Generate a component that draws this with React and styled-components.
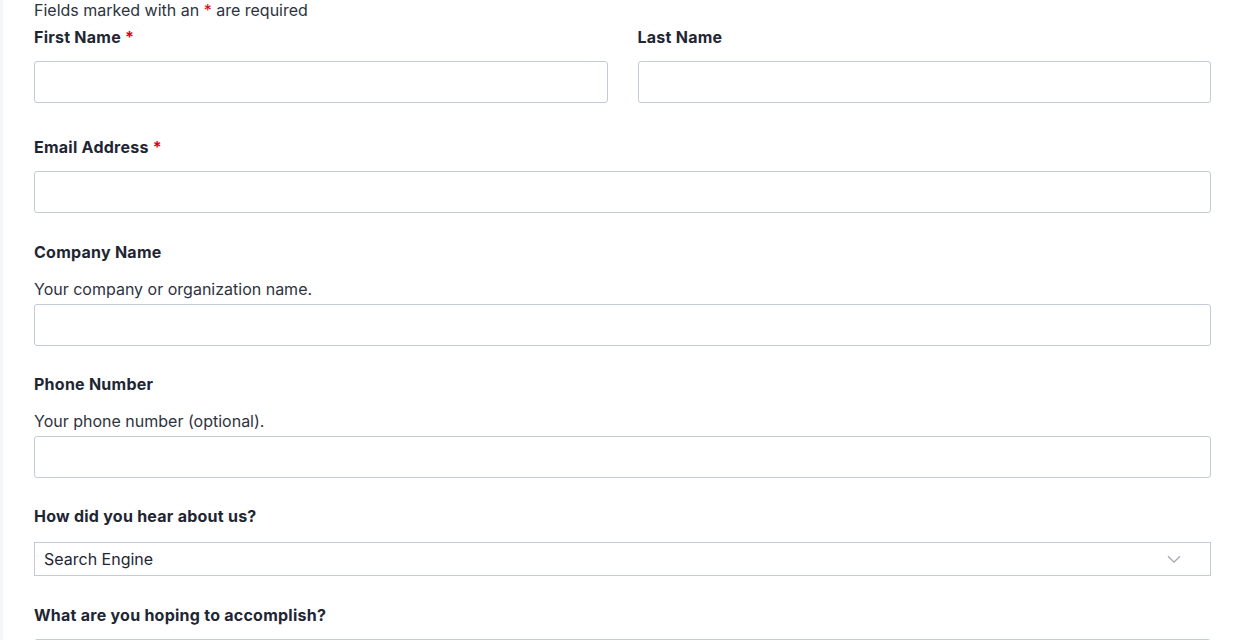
import React from 'react';
import styled, { createGlobalStyle } from 'styled-components';

const GlobalStyle = createGlobalStyle`
  html, body {
    margin: 0;
    padding: 0;
    background: #fff;
  }
  body {
    font-family: Inter, "Noto Sans", "Liberation Sans", sans-serif;
    color: #1f2633;
  }
  * { box-sizing: border-box; }
`

const Page = styled.div`
  min-height: 640px;
  border-left: 3px solid #f3f6f9;
  padding: 0 31px 0 31px;
`

const Note = styled.p`
  margin: 0 0 5px;
  font-size: 16px;
  line-height: 20px;
  color: #2d3340;
`

const Star = styled.span`
  color: #e0000f;
`

const Row = styled.div`
  display: flex;
  gap: 30px;
  margin-bottom: 32px;
`

const Field = styled.div`
  flex: 1;
  margin-bottom: ${props => props.space || '26px'};
`

const Label = styled.label`
  display: block;
  font-size: 16px;
  font-weight: 700;
  line-height: 24px;
  letter-spacing: 0.25px;
  margin-bottom: 12px;
  color: #1f2633;
`

const Help = styled.p`
  margin: 0 0 3px;
  padding-top: 1px;
  font-size: 16px;
  line-height: 24px;
  color: #2d3340;
`

const Input = styled.input`
  display: block;
  width: 100%;
  height: 42px;
  border: 1px solid #c1ccd7;
  border-radius: 3px;
  background: #fff;
  padding: 0 10px;
  font: inherit;
  font-size: 16px;
  outline: none;
`

const SelectWrap = styled.div`
  position: relative;
  padding-top: 2px;
`

const Select = styled.select`
  display: block;
  width: 100%;
  height: 34px;
  border: 1px solid #c1ccd7;
  border-radius: 0;
  background: #fff;
  padding: 0 9px;
  font: inherit;
  font-size: 16px;
  color: #1f2633;
  appearance: none;
  outline: none;
`

const Chevron = styled.svg`
  position: absolute;
  right: 30px;
  top: 50%;
  transform: translateY(-35%);
  pointer-events: none;
`

function ReqLabel({ children, required }) {
  return (
    <Label>
      {children}{required && <Star> *</Star>}
    </Label>
  )
}

export default function App() {
  return (
    <>
      <GlobalStyle />
      <Page>
        <Note>Fields marked with an <Star>*</Star> are required</Note>
        <Row>
          <Field space="0">
            <ReqLabel required>First Name</ReqLabel>
            <Input type="text" />
          </Field>
          <Field space="0">
            <ReqLabel>Last Name</ReqLabel>
            <Input type="text" />
          </Field>
        </Row>
        <Field space="27px">
          <ReqLabel required>Email Address</ReqLabel>
          <Input type="email" />
        </Field>
        <Field>
          <ReqLabel>Company Name</ReqLabel>
          <Help>Your company or organization name.</Help>
          <Input type="text" />
        </Field>
        <Field>
          <ReqLabel>Phone Number</ReqLabel>
          <Help>Your phone number (optional).</Help>
          <Input type="tel" />
        </Field>
        <Field space="27px">
          <ReqLabel>How did you hear about us?</ReqLabel>
          <SelectWrap>
            <Select defaultValue="search">
              <option value="search">Search Engine</option>
              <option value="social">Social Media</option>
              <option value="friend">Friend or Colleague</option>
              <option value="other">Other</option>
            </Select>
            <Chevron width="14" height="8" viewBox="0 0 14 8">
              <path d="M1 1l6 6 6-6" fill="none" stroke="#a3a8ae" strokeWidth="1.3" />
            </Chevron>
          </SelectWrap>
        </Field>
        <Field>
          <ReqLabel>What are you hoping to accomplish?</ReqLabel>
          <Input type="text" />
        </Field>
      </Page>
    </>
  )
}
